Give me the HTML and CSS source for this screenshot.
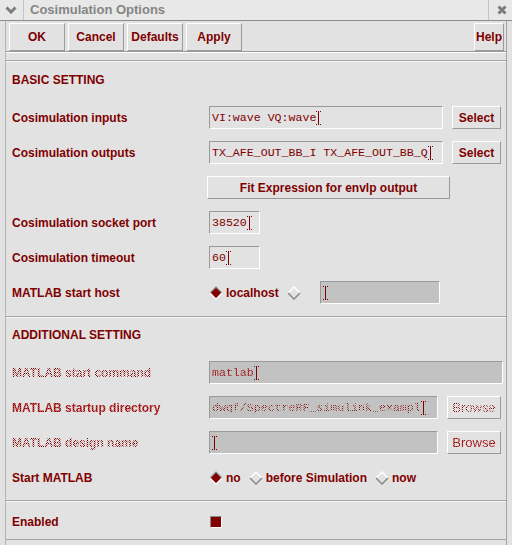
FILE: index.html
```html
<!DOCTYPE html>
<html>
<head>
<meta charset="utf-8">
<link rel="stylesheet" href="styles.css">
</head>
<body>
<div class="titlebar">
  <div class="tb-icon">
    <svg width="12" height="8" viewBox="0 0 12 8"><polyline points="1.5,1.5 6,6 10.5,1.5" fill="none" stroke="#7c7c7c" stroke-width="3"/></svg>
  </div>
  <div class="tb-title">Cosimulation Options</div>
  <div class="tb-close">
    <svg width="10" height="10" viewBox="0 0 10 10"><path d="M1.5 1.5 L8.5 8.5 M8.5 1.5 L1.5 8.5" stroke="#7c7c7c" stroke-width="3"/></svg>
  </div>
</div>
<div class="window">
  <div class="toolbar">
    <div class="btn tool">OK</div>
    <div class="btn tool">Cancel</div>
    <div class="btn tool">Defaults</div>
    <div class="btn tool">Apply</div>
    <div class="spacer"></div>
    <div class="btn help">Help</div>
  </div>

  <div class="panel p1">
    <div class="heading">BASIC SETTING</div>
    <div class="row">
      <span class="label">Cosimulation inputs</span>
      <div class="field w-sel">VI:wave VQ:wave<span class="caret"></span></div>
      <div class="btn side">Select</div>
    </div>
    <div class="row">
      <span class="label">Cosimulation outputs</span>
      <div class="field w-sel">TX_AFE_OUT_BB_I TX_AFE_OUT_BB_Q<span class="caret"></span></div>
      <div class="btn side">Select</div>
    </div>
    <div class="row">
      <span class="label fit-pad"></span>
      <div class="btn fit">Fit Expression for envlp output</div>
    </div>
    <div class="row">
      <span class="label">Cosimulation socket port</span>
      <div class="field w-num">38520<span class="caret"></span></div>
    </div>
    <div class="row">
      <span class="label">Cosimulation timeout</span>
      <div class="field w-num">60<span class="caret"></span></div>
    </div>
    <div class="row">
      <span class="label">MATLAB start host</span>
      <span class="radio on"><svg width="14" height="14" viewBox="0 0 14 14"><polygon points="7,1 13,7 7,13 1,7" fill="#800000"/><polyline points="1,7 7,1 13,7" fill="none" stroke="#8a8a8a" stroke-width="1.2"/><polyline points="1,7 7,13 13,7" fill="none" stroke="#ffffff" stroke-width="1.2"/></svg></span>
      <span class="opt">localhost</span>
      <span class="radio off"><svg width="14" height="14" viewBox="0 0 14 14"><polyline points="1,7 7,1 13,7" fill="none" stroke="#ffffff" stroke-width="1.5"/><polyline points="1,7 7,13 13,7" fill="none" stroke="#8a8a8a" stroke-width="1.5"/></svg></span>
      <div class="field dis w-host"><span class="caret"></span></div>
    </div>
  </div>

  <div class="panel p2">
    <div class="heading">ADDITIONAL SETTING</div>
    <div class="row">
      <span class="label stip">MATLAB start command</span>
      <div class="field dis w-full"><span class="stip red">matlab</span><span class="caret"></span></div>
    </div>
    <div class="row">
      <span class="label stip red">MATLAB startup directory</span>
      <div class="field dis w-br"><span class="stip">dwqf/SpectreRF_simulink_exampl</span><span class="caret"></span></div>
      <div class="btn side br"><span class="stip">Browse</span></div>
    </div>
    <div class="row">
      <span class="label stip">MATLAB design name</span>
      <div class="field dis w-br"><span class="caret"></span></div>
      <div class="btn side br"><span class="stip red">Browse</span></div>
    </div>
    <div class="row">
      <span class="label">Start MATLAB</span>
      <span class="radio on"><svg width="14" height="14" viewBox="0 0 14 14"><polygon points="7,1 13,7 7,13 1,7" fill="#800000"/><polyline points="1,7 7,1 13,7" fill="none" stroke="#8a8a8a" stroke-width="1.2"/><polyline points="1,7 7,13 13,7" fill="none" stroke="#ffffff" stroke-width="1.2"/></svg></span>
      <span class="opt">no</span>
      <span class="radio off"><svg width="14" height="14" viewBox="0 0 14 14"><polyline points="1,7 7,1 13,7" fill="none" stroke="#ffffff" stroke-width="1.5"/><polyline points="1,7 7,13 13,7" fill="none" stroke="#8a8a8a" stroke-width="1.5"/></svg></span>
      <span class="opt">before Simulation</span>
      <span class="radio off"><svg width="14" height="14" viewBox="0 0 14 14"><polyline points="1,7 7,1 13,7" fill="none" stroke="#ffffff" stroke-width="1.5"/><polyline points="1,7 7,13 13,7" fill="none" stroke="#8a8a8a" stroke-width="1.5"/></svg></span>
      <span class="opt">now</span>
    </div>
  </div>

  <div class="panel p3">
    <div class="row">
      <span class="label">Enabled</span>
      <span class="check"></span>
    </div>
  </div>
</div>
</body>
</html>
```

FILE: styles.css
```css
* { box-sizing: border-box; }
html, body {
  margin: 0;
  padding: 0;
  width: 512px;
  height: 545px;
  overflow: hidden;
  background: #e2e2e2;
  font-family: "Liberation Sans", Arial, sans-serif;
  font-weight: bold;
  font-size: 12px;
  color: #800000;
}

.titlebar {
  height: 21px;
  display: flex;
  background: #e8e8e8;
  border-bottom: 1px solid #8c8c8c;
}
.tb-icon {
  width: 24px;
  border-right: 1px solid #c4c4c4;
  display: flex;
  align-items: center;
  justify-content: center;
  padding-right: 2px;
}
.tb-title {
  flex: 1;
  padding-left: 6px;
  font-size: 13px;
  line-height: 20px;
  color: #858585;
}
.tb-close {
  width: 24px;
  border-left: 1px solid #c4c4c4;
  display: flex;
  align-items: center;
  justify-content: center;
  padding-left: 2px;
}

.window {
  margin-left: 5px;
  width: 502px;
  height: 524px;
  border-left: 1px solid #b4b4b4;
  border-right: 1px solid #a4a4a4;
}

.toolbar {
  height: 31px;
  display: flex;
  align-items: flex-start;
  padding: 2px 2px 0 3px;
  border-bottom: 1px solid #9a9a9a;
  box-shadow: 0 1px 0 #ffffff;
}
.spacer { flex: 1; }

.btn {
  display: flex;
  align-items: center;
  justify-content: center;
  background: #e2e2e2;
  border-top: 1px solid #ffffff;
  border-left: 1px solid #ffffff;
  border-right: 1px solid #9a9a9a;
  border-bottom: 1px solid #9a9a9a;
  color: #800000;
  white-space: nowrap;
}
.tool {
  width: 56px;
  height: 28px;
  margin-right: 3px;
}
.help {
  width: 30px;
  height: 28px;
}

.panel {
  border-top: 1px solid #a4a4a4;
  box-shadow: inset 0 1px 0 #f4f4f4;
  padding-left: 6px;
}
.p1 { margin-top: 8px; padding-bottom: 6px; }
.p2 { padding-bottom: 5px; }
.p3 { padding-top: 3px; border-bottom: 1px solid #a4a4a4; }

.heading {
  padding-top: 9px;
  line-height: 20px;
  margin-bottom: 10px;
}
.p2 .heading { padding-top: 8px; }

.row {
  height: 35px;
  display: flex;
  align-items: center;
}
.label {
  width: 197px;
  flex: none;
}
.fit-pad { width: 195px; }

.field {
  height: 23px;
  border-top: 1px solid #9a9a9a;
  border-left: 1px solid #9a9a9a;
  border-right: 1px solid #ffffff;
  border-bottom: 1px solid #ffffff;
  font-family: "Liberation Mono", "Courier New", monospace;
  font-weight: normal;
  font-size: 11.6px;
  line-height: 21px;
  padding-left: 2px;
  white-space: nowrap;
  overflow: hidden;
  display: flex;
  align-items: center;
}
.field.dis { background: #c2c2c2; }
.w-sel { width: 234px; margin-right: 9px; }
.w-num { width: 51px; }
.w-host { width: 120px; margin-left: 19px; }
.w-full { width: 294px; }
.w-br { width: 229px; margin-right: 9px; }

.side { width: 49px; height: 23px; }
.br { width: 54px; font-weight: normal; font-size: 13px; }
.fit { width: 243px; height: 23px; }

.caret {
  display: inline-block;
  width: 5px;
  height: 14px;
  border-top: 1px dotted #800000;
  border-bottom: 1px dotted #800000;
  background: linear-gradient(#800000, #800000) center / 1px 100% no-repeat;
}

.stip {
  color: transparent;
  background: repeating-conic-gradient(#800000 0 25%, transparent 0 50%) 0 0 / 2px 2px;
  -webkit-background-clip: text;
  background-clip: text;
}
.stip.red {
  background: repeating-conic-gradient(#8c0000 0 25%, #c04040 0 50%) 0 0 / 2px 2px;
  -webkit-background-clip: text;
  background-clip: text;
}

.radio {
  width: 14px;
  height: 14px;
  display: inline-flex;
  flex: none;
}
.radio svg { display: block; }
.opt { margin-left: 3px; margin-right: 8px; }

.check {
  width: 12px;
  height: 12px;
  margin-left: 1px;
  background: #800000;
  border-top: 1px solid #8a8a8a;
  border-left: 1px solid #8a8a8a;
  border-right: 1px solid #ffffff;
  border-bottom: 1px solid #ffffff;
}
```
